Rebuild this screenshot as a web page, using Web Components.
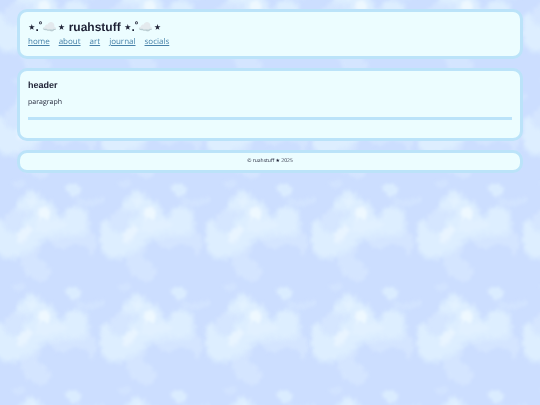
<!DOCTYPE html>
<html lang="en">
<head>
<meta charset="utf-8">
<title>ruahstuff</title>
<style>
html { background: #ccdeff; }
body { margin: 0; color: #1d2034; font-family: "Open Sans", sans-serif; text-rendering: geometricPrecision; }
</style>
</head>
<body>
<cloud-sky></cloud-sky>
<site-page>
  <site-header slot="header"></site-header>
  <site-article slot="main" heading="header">paragraph</site-article>
  <site-footer slot="footer">© ruahstuff ★ 2025</site-footer>
</site-page>
<script>
class Base extends HTMLElement {
  constructor() {
    super();
    this.attachShadow({ mode: "open" }).innerHTML = this.constructor.markup;
  }
}

customElements.define("cloud-sky", class extends Base {
  static markup = `
<style>
:host { position: fixed; inset: 0; z-index: -1; display: block; }
svg { display: block; width: 100%; height: 100%; }
</style>
<svg aria-hidden="true">
  <defs>
    <filter id="soft" x="-20%" y="-20%" width="140%" height="140%" color-interpolation-filters="sRGB">
      <feTurbulence type="fractalNoise" baseFrequency="0.08" numOctaves="4" seed="4"/>
      <feDisplacementMap in="SourceGraphic" scale="22" xChannelSelector="R" yChannelSelector="G"/>
      <feGaussianBlur stdDeviation="5"/>
    </filter>
    <g id="cloud" filter="url(#soft)">
      <g fill="#ddeeff">
        <path opacity=".45" d="M145 190 L262 175 L286 190 L290 230 L276 258 L258 225 L225 218 L200 234 L170 232 L148 212Z"/>
        <path opacity=".45" d="M62 235 L120 205 L122 235 L108 258 L140 275 L154 300 L142 326 L112 330 L80 312 L62 280Z"/>
        <path opacity=".5" d="M12 140 L48 108 L92 118 L70 160 L38 186 L10 174Z"/>
        <path opacity=".35" d="M225 75 L258 88 L285 84 L306 75 L316 88 L290 102 L262 110 L230 98Z"/>
        <path opacity=".3" d="M35 32 L62 24 L78 34 L68 50 L40 50Z"/>
        <path opacity=".85" d="M193 44 L220 38 L245 46 L240 70 L222 78 L202 66Z"/>
        <path opacity=".55" d="M44 104 L66 74 L95 50 L128 80 L160 94 L174 124 L188 134 L198 112 L234 102 L266 120 L270 160 L260 194 L226 200 L186 200 L150 208 L122 220 L100 242 L66 258 L46 268 L8 266 L-14 242 L-21 200 L-16 156 L2 139 L22 174 L40 184 L60 166 L72 142 L84 128 L50 122Z"/>
        <path d="M52 104 L72 80 L95 58 L122 86 L152 100 L166 130 L188 146 L204 118 L232 112 L256 126 L260 158 L248 184 L226 190 L186 186 L150 194 L118 206 L94 230 L66 244 L46 258 L12 254 L-8 236 L-15 200 L-12 164 L2 149 L18 180 L42 192 L66 170 L78 146 L104 134 L94 114 L60 114Z"/>
      </g>
      <g fill="#f0f8ff">
        <path opacity=".9" d="M114 116 L136 104 L154 122 L144 144 L120 142Z"/>
        <path opacity=".6" d="M54 184 L84 162 L100 174 L76 208 L54 218Z"/>
        <path opacity=".3" d="M80 84 L102 74 L114 96 L92 110Z"/>
        <path opacity=".25" d="M110 146 L180 150 L206 160 L150 180 L104 180Z"/>
      </g>
    </g>
    <pattern id="sky" width="317" height="310" patternUnits="userSpaceOnUse" patternTransform="translate(0 171) scale(.3333)">
      <rect width="317" height="310" fill="#ccdeff"/>
      <use href="#cloud"/>
      <use href="#cloud" x="317"/>
      <use href="#cloud" y="-310"/>
    </pattern>
  </defs>
  <rect width="100%" height="100%" fill="url(#sky)"/>
</svg>`;
});

customElements.define("site-page", class extends Base {
  static markup = `
<style>
:host { display: flex; flex-direction: column; gap: 9px; padding: 9px 17px; }
</style>
<slot name="header"></slot><slot name="main"></slot><slot name="footer"></slot>`;
});

customElements.define("site-panel", class extends Base {
  static markup = `
<style>
:host { display: block; padding: 8px; border: 3px solid #bbe3f9; border-radius: 10px; background: #ecfdff; }
</style>
<slot></slot>`;
});

customElements.define("site-header", class extends Base {
  static markup = `
<style>
:host { display: block; }
h1 { margin: 0; font: bold 12px/14px "Liberation Sans", Arial, sans-serif; }
nav { display: flex; gap: 9px; padding-top: 1px; font-size: 8px; line-height: 13px; }
a { color: #4680a8; }
</style>
<site-panel>
  <h1>⋆.˚☁️⋆ ruahstuff ⋆.˚☁️⋆</h1>
  <nav><a href="#home">home</a><a href="#about">about</a><a href="#art">art</a><a href="#journal">journal</a><a href="#socials">socials</a></nav>
</site-panel>`;
});

customElements.define("site-article", class extends Base {
  static markup = `
<style>
:host { display: block; }
h2 { margin: 0 0 7px; font: bold 9px/12px "Liberation Sans", Arial, sans-serif; }
p { margin: 0 0 9px; font-size: 7px; line-height: 10px; }
hr { margin: 0 0 10px; border: 0; height: 3px; background: #bbe3f9; }
</style>
<site-panel><h2></h2><p><slot></slot></p><hr></site-panel>`;
  connectedCallback() {
    this.shadowRoot.querySelector("h2").textContent = this.getAttribute("heading");
  }
});

customElements.define("site-footer", class extends Base {
  static markup = `
<style>
:host { display: block; }
site-panel { padding: 6px 8px; }
footer { text-align: center; font-size: 5px; line-height: 5px; }
</style>
<site-panel><footer><slot></slot></footer></site-panel>`;
});
</script>
</body>
</html>
